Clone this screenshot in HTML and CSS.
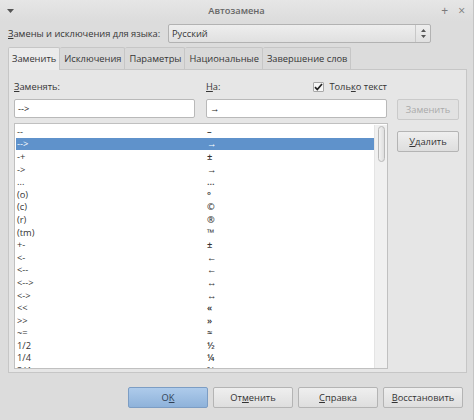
FILE: index.html
```html
<!DOCTYPE html>
<html lang="ru">
<head>
<meta charset="utf-8">
<title>Автозамена</title>
<link rel="stylesheet" href="styles.css">
</head>
<body>
<div class="window">
  <div class="titlebar">
    <div class="tb-side tb-left"><svg width="7" height="4" viewBox="0 0 7 4"><path d="M0 0h7L3.5 4z" fill="#555"/></svg></div>
    <div class="tb-title">Автозамена</div>
    <div class="tb-side tb-right"><span class="tb-btn">+</span><span class="tb-btn">×</span></div>
  </div>

  <div class="lang-row">
    <label class="lang-label"><u>З</u>амены и исключения для языка:</label>
    <div class="select">
      <span class="select-text">Русский</span>
      <span class="spin">
        <svg width="5" height="11" viewBox="0 0 5 11"><path d="M0 4L2.5 1L5 4z M0 7L2.5 10L5 7z" fill="#555"/></svg>
      </span>
    </div>
  </div>

  <div class="tabs">
    <div class="tab active">Заменить</div>
    <div class="tab">Исключения</div>
    <div class="tab">Параметры</div>
    <div class="tab">Национальные</div>
    <div class="tab">Завершение слов</div>
  </div>

  <div class="panel">
    <div class="panel-main">
      <div class="edit-area">
        <div class="labels">
          <div class="lbl"><u>З</u>аменять:</div>
          <div class="lbl lbl-right">
            <span><u>Н</u>а:</span>
            <span class="check">
              <span class="checkbox"><svg width="9" height="8" viewBox="0 0 9 8"><path d="M1 4.2L3.3 6.6L8 1" fill="none" stroke="#222" stroke-width="1.7"/></svg></span>
              <span>Толь<u>к</u>о текст</span>
            </span>
          </div>
        </div>
        <div class="inputs">
          <div class="input">--&gt;</div>
          <div class="input">→</div>
        </div>
        <div class="list">
          <div class="rows">
            <div class="row"><span class="c1">--</span><span class="c2">–</span></div>
            <div class="row sel"><span class="c1">--&gt;</span><span class="c2">→</span></div>
            <div class="row"><span class="c1">-+</span><span class="c2">±</span></div>
            <div class="row"><span class="c1">-&gt;</span><span class="c2">→</span></div>
            <div class="row"><span class="c1">...</span><span class="c2">…</span></div>
            <div class="row"><span class="c1">(o)</span><span class="c2">°</span></div>
            <div class="row"><span class="c1">(c)</span><span class="c2">©</span></div>
            <div class="row"><span class="c1">(r)</span><span class="c2">®</span></div>
            <div class="row"><span class="c1">(tm)</span><span class="c2">™</span></div>
            <div class="row"><span class="c1">+-</span><span class="c2">±</span></div>
            <div class="row"><span class="c1">&lt;-</span><span class="c2">←</span></div>
            <div class="row"><span class="c1">&lt;--</span><span class="c2">←</span></div>
            <div class="row"><span class="c1">&lt;--&gt;</span><span class="c2">↔</span></div>
            <div class="row"><span class="c1">&lt;-&gt;</span><span class="c2">↔</span></div>
            <div class="row"><span class="c1">&lt;&lt;</span><span class="c2">«</span></div>
            <div class="row"><span class="c1">&gt;&gt;</span><span class="c2">»</span></div>
            <div class="row"><span class="c1">~=</span><span class="c2">≈</span></div>
            <div class="row"><span class="c1">1/2</span><span class="c2">½</span></div>
            <div class="row"><span class="c1">1/4</span><span class="c2">¼</span></div>
            <div class="row"><span class="c1">3/4</span><span class="c2">¾</span></div>
          </div>
          <div class="scrollbar"><div class="thumb"></div></div>
        </div>
      </div>
      <div class="side-buttons">
        <div class="btn disabled">Заменить</div>
        <div class="btn"><u>У</u>далить</div>
      </div>
    </div>
  </div>

  <div class="footer">
    <div class="btn fbtn ok">O<u>K</u></div>
    <div class="btn fbtn">От<u>м</u>енить</div>
    <div class="btn fbtn"><u>С</u>правка</div>
    <div class="btn fbtn"><u>В</u>осстановить</div>
  </div>
</div>
</body>
</html>
```

FILE: styles.css
```css
html, body {
  margin: 0;
  padding: 0;
}
body {
  width: 474px;
  height: 420px;
  overflow: hidden;
  font-family: "Open Sans", "Noto Sans", sans-serif;
  font-size: 9.3px;
  color: #353535;
  background: #dcdcdc;
}
u {
  text-decoration: underline;
  text-underline-offset: 1px;
}
.window {
  box-sizing: border-box;
  width: 474px;
  height: 420px;
  background: #dcdcdc;
  border-right: 1px solid #c4c4c4;
  display: flex;
  flex-direction: column;
}
.titlebar {
  height: 21px;
  display: flex;
  align-items: center;
  background: linear-gradient(#e6e6e6, #dcdcdc);
  color: #666;
  font-size: 9.3px;
}
.tb-side {
  width: 60px;
  display: flex;
  align-items: center;
}
.tb-left {
  padding-left: 7px;
  box-sizing: border-box;
}
.tb-title {
  flex: 1;
  text-align: center;
  font-weight: 600;
}
.tb-right {
  justify-content: flex-end;
  gap: 10px;
  padding-right: 8px;
  box-sizing: border-box;
  font-size: 12px;
  color: #7a7a7a;
}
.tb-btn {
  line-height: 1;
}
.lang-row {
  display: grid;
  grid-template-columns: 160px 263px;
  align-items: center;
  padding-left: 8px;
  margin-top: 3px;
  height: 19px;
  white-space: nowrap;
}
.select {
  box-sizing: border-box;
  height: 19px;
  border: 1px solid #b2b2b2;
  border-radius: 2px;
  background: linear-gradient(#eeeeee, #e0e0e0);
  display: flex;
  align-items: center;
  padding-left: 3px;
}
.select-text {
  flex: 1;
}
.spin {
  width: 14px;
  height: 17px;
  border-left: 1px solid #c8c8c8;
  display: flex;
  align-items: center;
  justify-content: center;
}
.tabs {
  display: flex;
  margin-top: 4px;
  margin-left: 8px;
  height: 22px;
  position: relative;
  z-index: 1;
  white-space: nowrap;
}
.tab {
  box-sizing: border-box;
  height: 22px;
  padding: 0 3px 0 4px;
  display: flex;
  align-items: center;
  border: 1px solid #c6c6c6;
  border-bottom: none;
  border-left: none;
  background: #d9d9d9;
  border-radius: 2px 2px 0 0;
}
.tab.active {
  background: #ebebeb;
  border-left: 1px solid #c6c6c6;
  height: 23px;
  padding: 0 3px 1px 3px;
  margin-bottom: -1px;
}
.panel {
  box-sizing: border-box;
  margin-left: 8px;
  width: 459px;
  height: 304px;
  border: 1px solid #c6c6c6;
  background: #e6e6e6;
  padding: 8px 7px 0 5px;
}
.panel-main {
  display: flex;
  gap: 9px;
}
.edit-area {
  width: 374px;
  display: flex;
  flex-direction: column;
}
.labels {
  display: grid;
  grid-template-columns: 181px 181px;
  column-gap: 11px;
  height: 17px;
  align-items: center;
}
.lbl-right {
  display: flex;
  justify-content: space-between;
  align-items: center;
}
.check {
  display: flex;
  align-items: center;
  gap: 5px;
}
.checkbox {
  box-sizing: border-box;
  width: 11px;
  height: 10px;
  border: 1px solid #a8a8a8;
  border-radius: 1px;
  background: #f6f6f6;
  display: flex;
  align-items: center;
  justify-content: center;
}
.inputs {
  display: grid;
  grid-template-columns: 181px 181px;
  column-gap: 11px;
  margin-top: 4px;
}
.input {
  box-sizing: border-box;
  height: 19px;
  background: #fff;
  border: 1px solid #b9b9b9;
  border-radius: 2px;
  padding-left: 3px;
  display: flex;
  align-items: center;
  color: #222;
}
.list {
  box-sizing: border-box;
  margin-top: 5px;
  height: 246px;
  background: #fff;
  border: 1px solid #c0c0c0;
  display: flex;
  overflow: hidden;
  padding: 1px 0 0 1px;
}
.rows {
  flex: 1;
}
.row {
  height: 12.6px;
  display: flex;
  align-items: center;
  font-size: 9.3px;
  color: #333;
  white-space: nowrap;
}
.row.sel {
  background: #5f92cb;
  color: #fff;
}
.c1 {
  width: 190px;
  padding-left: 1px;
}
.c2 {
  font-weight: 600;
}
.scrollbar {
  width: 12px;
  background: #f0f0f0;
  border-left: 1px solid #e4e4e4;
  display: flex;
  justify-content: center;
  padding-top: 1px;
}
.thumb {
  box-sizing: border-box;
  width: 7px;
  height: 36px;
  border: 1px solid #b8b8b8;
  border-radius: 4px;
  background: linear-gradient(90deg, #f2f2f2, #dedede);
}
.side-buttons {
  padding-top: 21px;
  display: flex;
  flex-direction: column;
  gap: 11px;
}
.btn {
  box-sizing: border-box;
  width: 62px;
  height: 21px;
  border: 1px solid #b4b4b4;
  border-radius: 2px;
  background: linear-gradient(#efefef, #dedede);
  display: flex;
  align-items: center;
  justify-content: center;
  color: #333;
  white-space: nowrap;
}
.btn.disabled {
  color: #aaaaaa;
  background: #e2e2e2;
  border-color: #cacaca;
}
.footer {
  display: flex;
  justify-content: flex-end;
  gap: 5px;
  padding-right: 10px;
  margin-top: 14px;
}
.fbtn {
  width: 80px;
}
.btn.ok {
  background: linear-gradient(#aecbeb, #8eb2da);
  border-color: #7c9dc4;
  color: #2f3f55;
}
```
